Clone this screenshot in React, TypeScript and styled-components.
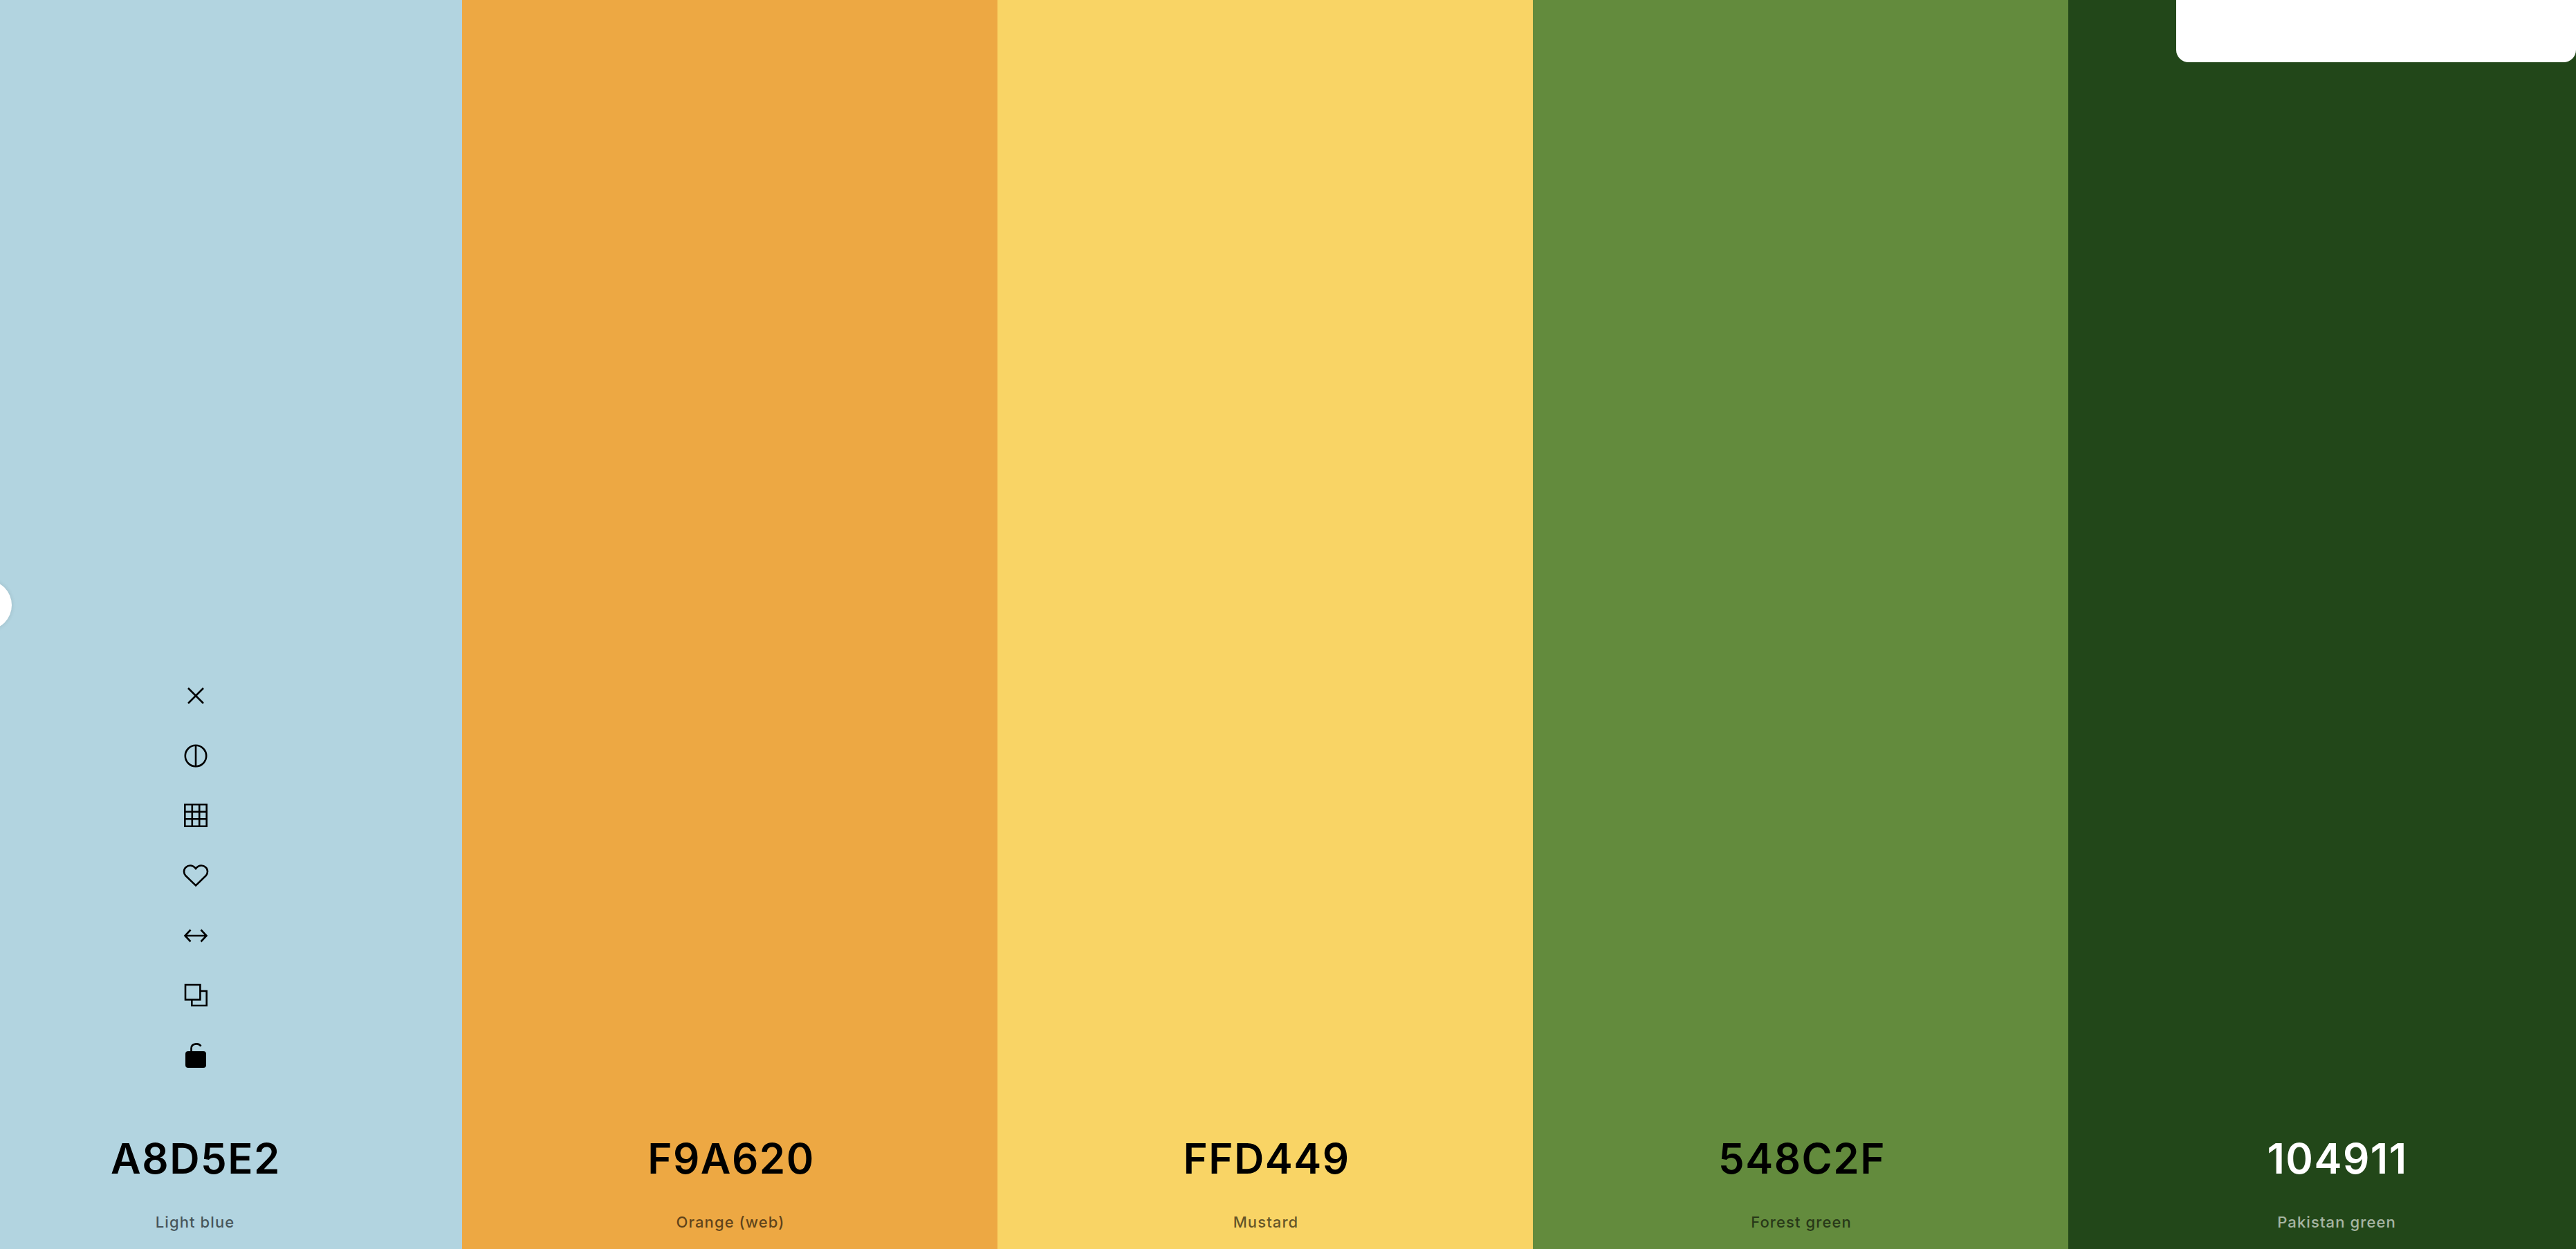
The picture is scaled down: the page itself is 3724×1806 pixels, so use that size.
import { ReactNode } from 'react'
import styled, { createGlobalStyle } from 'styled-components'

const GlobalStyle = createGlobalStyle`
    html, body {
        margin: 0;
        padding: 0;
        overflow: hidden;
    }
`

type Swatch = {
    hex: string
    name: string
    fill: string
    light?: boolean
}

const swatches: Swatch[] = [
    { hex: 'A8D5E2', name: 'Light blue', fill: '#b2d4e0' },
    { hex: 'F9A620', name: 'Orange (web)', fill: '#eda843' },
    { hex: 'FFD449', name: 'Mustard', fill: '#f9d465' },
    { hex: '548C2F', name: 'Forest green', fill: '#638b3d' },
    { hex: '104911', name: 'Pakistan green', fill: '#224719', light: true },
]

function Icon({ children }: { children: ReactNode }) {
    return (
        <IconSvg viewBox="0 0 40 40" fill="none" stroke="currentColor" strokeWidth="2.6">
            {children}
        </IconSvg>
    )
}

function App() {
    return (
        <Page>
            <GlobalStyle />
            <Strip>
                {swatches.map((swatch, index) => (
                    <Column key={swatch.hex} $fill={swatch.fill} $light={swatch.light}>
                        {index === 0 && (
                            <Tools>
                                <Icon>
                                    <path d="M9 9 L31 31 M31 9 L9 31" />
                                </Icon>
                                <Icon>
                                    <circle cx="20" cy="20" r="15.200" />
                                    <path d="M20 5 V35" />
                                </Icon>
                                <Icon>
                                    <path d="M4.300 4.300 H35.700 V35.700 H4.300 Z M14.800 4.300 V35.700 M25.200 4.300 V35.700 M4.300 14.800 H35.700 M4.300 25.200 H35.700" />
                                </Icon>
                                <Icon>
                                    <path d="M20 34.400 L5.400 20.300 C2 16.800 2.300 10.800 5.800 8 C9.300 4.600 15.300 4.700 18.600 8.400 L20 10 L21.400 8.400 C24.700 4.700 30.700 4.600 34.200 8 C37.700 10.800 38 16.800 34.600 20.300 Z" />
                                </Icon>
                                <Icon>
                                    <path d="M5 20 H35 M12.500 11.500 L4.500 20 L12.500 28.500 M27.500 11.500 L35.500 20 L27.500 28.500" />
                                </Icon>
                                <Icon>
                                    <path d="M5 5 H26.400 V26.400 H5 Z M26.400 14 H35.700 V35 H14.300 V26.400" />
                                </Icon>
                                <Icon>
                                    <path d="M13.500 15 V10 C13.500 2.500 24 1.500 27.500 6.800" />
                                    <rect x="5" y="14" width="30" height="24" rx="4" fill="currentColor" stroke="none" />
                                </Icon>
                            </Tools>
                        )}
                        <Hex>{swatch.hex}</Hex>
                        <Name>{swatch.name}</Name>
                    </Column>
                ))}
            </Strip>
            <Handle />
            <Corner />
        </Page>
    )
}

export default App

const Page = styled.div`
    position: relative;
    width: 3724px;
    height: 1806px;
    overflow: hidden;
    font-family: Inter, 'Noto Sans', sans-serif;
`

const Strip = styled.div`
    display: flex;
    width: 3870px;
    height: 100%;
    margin-left: -106px;
`

const Column = styled.div<{ $fill: string; $light?: boolean }>`
    flex: 0 0 774px;
    display: flex;
    flex-direction: column;
    align-items: center;
    justify-content: flex-end;
    padding-bottom: 22px;
    box-sizing: border-box;
    background-color: ${({ $fill }) => $fill};
    color: ${({ $light }) => ($light ? '#ffffff' : '#000000')};
`

const Tools = styled.div`
    display: flex;
    flex-direction: column;
    align-items: center;
    gap: 46.7px;
    margin-bottom: 93px;
    padding-left: 4px;
    color: #000000;
`

const IconSvg = styled.svg`
    display: block;
    width: 40px;
    height: 40px;
`

const Hex = styled.div`
    padding-left: 4px;
    font-size: 60px;
    line-height: 72px;
    font-weight: 600;
    letter-spacing: 1.5px;
`

const Name = styled.div`
    margin-top: 39px;
    padding-left: 2px;
    font-size: 22px;
    line-height: 34px;
    font-weight: 500;
    letter-spacing: 1.1px;
    opacity: 0.6;
`

const Handle = styled.div`
    position: absolute;
    left: -55px;
    top: 839px;
    width: 72px;
    height: 72px;
    border-radius: 50%;
    background: #ffffff;
    box-shadow: 0 0 6px rgba(0, 0, 0, 0.12);
`

const Corner = styled.div`
    position: absolute;
    top: 0;
    right: 0;
    width: 578px;
    height: 90px;
    border-radius: 0 0 18px 18px;
    background: #ffffff;
`
